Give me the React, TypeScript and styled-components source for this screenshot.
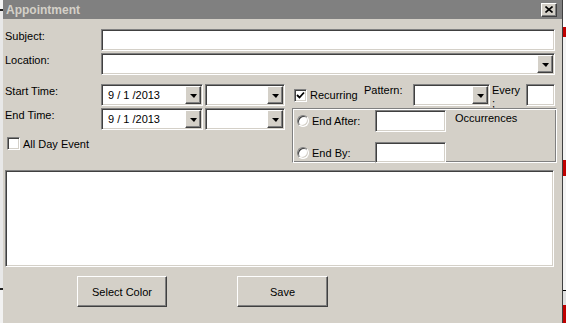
import styled, { createGlobalStyle } from 'styled-components';

const GlobalStyle = createGlobalStyle`
  html, body {
    margin: 0;
    padding: 0;
    background: #ffffff;
  }
  body {
    font-family: "Liberation Sans", Arial, sans-serif;
    font-size: 11px;
    color: #000000;
  }
`;

const Page = styled.div`
  display: flex;
  width: 566px;
  height: 323px;
  overflow: hidden;
`;

const LeftEdge = styled.div`
  width: 3px;
  background: linear-gradient(to bottom, #f2f2f2 0 9px, #202020 9px 11px, #e8e8e8 11px 288px, #202020 288px 290px, #f2f2f2 290px);
`;

const RightEdge = styled.div`
  width: 3px;
  border-left: 1px solid #404040;
  background: linear-gradient(to bottom, #ffffff 0 27px, #c00000 27px 37px, #f4f4f4 37px 160px, #c00000 160px 176px, #f4f4f4 176px 290px, #000000 290px 291px, #e0e0e0 291px 305px, #c00000 305px);
`;

const Dialog = styled.div`
  width: 559px;
  display: flex;
  flex-direction: column;
`;

const TitleBar = styled.div`
  height: 19px;
  flex-shrink: 0;
  background: #808080;
  display: flex;
  align-items: center;
  justify-content: space-between;
  padding: 0 5px 0 3px;
`;

const Title = styled.span`
  color: #d4d0c8;
  font-weight: bold;
  font-size: 12px;
`;

const raised = `
  background: #d4d0c8;
  border: 1px solid;
  border-color: #ffffff #404040 #404040 #ffffff;
  box-shadow: inset -1px -1px #808080, inset 1px 1px #d4d0c8;
`;

const sunken = `
  background: #ffffff;
  border: 1px solid;
  border-color: #808080 #ffffff #ffffff #808080;
  box-shadow: inset 1px 1px #404040, inset -1px -1px #d4d0c8;
`;

const CloseButton = styled.div`
  ${raised}
  box-sizing: border-box;
  width: 16px;
  height: 14px;
  display: flex;
  align-items: center;
  justify-content: center;
`;

const Body = styled.div`
  flex: 1;
  background: #d4d0c8;
  padding: 10px 0 0 2px;
  display: flex;
  flex-direction: column;
`;

const Row = styled.div<{ $mt?: number }>`
  display: flex;
  align-items: flex-start;
  margin-top: ${p => p.$mt ?? 0}px;
`;

const Label = styled.span<{ $w?: number; $top?: number }>`
  width: ${p => (p.$w ? `${p.$w}px` : 'auto')};
  flex-shrink: 0;
  line-height: 13px;
  padding-top: ${p => p.$top ?? 0}px;
  white-space: nowrap;
`;

const TextBox = styled.div<{ $w: number; $h?: number }>`
  ${sunken}
  box-sizing: border-box;
  width: ${p => p.$w}px;
  height: ${p => p.$h ?? 22}px;
  flex-shrink: 0;
`;

const Combo = styled.div<{ $w: number; $ml?: number }>`
  ${sunken}
  box-sizing: border-box;
  width: ${p => p.$w}px;
  height: 22px;
  margin-left: ${p => p.$ml ?? 0}px;
  flex-shrink: 0;
  display: flex;
  align-items: center;
  justify-content: space-between;
  padding: 0 1px 0 6px;
`;

const ComboText = styled.span`
  white-space: pre;
`;

const DropButton = styled.div`
  ${raised}
  box-sizing: border-box;
  width: 16px;
  height: 18px;
  display: flex;
  align-items: center;
  justify-content: center;
  margin-left: auto;
`;

const Arrow = styled.div`
  width: 0;
  height: 0;
  border-left: 4px solid transparent;
  border-right: 3px solid transparent;
  border-top: 4px solid #000000;
  margin-top: 1px;
`;

const Middle = styled.div`
  display: flex;
  margin-top: 9px;
`;

const LeftCol = styled.div`
  width: 280px;
  display: flex;
  flex-direction: column;
`;

const RightPanel = styled.div`
  margin-left: 7px;
  width: 265px;
  display: flex;
  flex-direction: column;
`;

const CheckRow = styled.div<{ $h: number; $ml?: number; $mt?: number }>`
  display: flex;
  align-items: center;
  height: ${p => p.$h}px;
  margin-left: ${p => p.$ml ?? 0}px;
  margin-top: ${p => p.$mt ?? 0}px;
`;

const CheckBox = styled.div`
  ${sunken}
  box-sizing: border-box;
  width: 13px;
  height: 13px;
  flex-shrink: 0;
  display: flex;
  align-items: center;
  justify-content: center;
`;

const Radio = styled.div`
  ${sunken}
  box-sizing: border-box;
  width: 12px;
  height: 12px;
  border-radius: 50%;
  flex-shrink: 0;
`;

const InlineLabel = styled.span<{ $w?: number; $ml?: number; $top?: boolean }>`
  width: ${p => (p.$w ? `${p.$w}px` : 'auto')};
  margin-left: ${p => p.$ml ?? 0}px;
  flex-shrink: 0;
  white-space: nowrap;
  align-self: ${p => (p.$top ? 'flex-start' : 'auto')};
  padding-top: ${p => (p.$top ? 2 : 0)}px;
`;

const RecurRow = styled.div`
  display: flex;
  align-items: flex-start;
  height: 22px;
`;

const EveryLabel = styled.span`
  width: 34px;
  margin-left: 2px;
  line-height: 13px;
  flex-shrink: 0;
`;

const GroupBox = styled.div`
  box-sizing: border-box;
  width: 265px;
  height: 55px;
  margin-top: 2px;
  border: 1px solid;
  border-color: #808080 #ffffff #ffffff #808080;
  box-shadow: inset 1px 1px #ffffff, inset -1px -1px #808080;
  padding: 1px 0 0 4px;
  display: flex;
  flex-direction: column;
`;

const GroupRow = styled.div<{ $mt?: number }>`
  display: flex;
  align-items: center;
  margin-top: ${p => p.$mt ?? 0}px;
`;

const Memo = styled.div`
  ${sunken}
  box-sizing: border-box;
  width: 549px;
  height: 97px;
  margin-top: 7px;
  flex-shrink: 0;
`;

const ButtonRow = styled.div`
  display: flex;
  gap: 70px;
  margin-top: 9px;
  padding-left: 72px;
`;

const PushButton = styled.div<{ $w: number }>`
  ${raised}
  box-sizing: border-box;
  width: ${p => p.$w}px;
  height: 31px;
  display: flex;
  align-items: center;
  justify-content: center;
`;

function DropDown(props: { w: number; ml?: number; text?: string }) {
  return (
    <Combo $w={props.w} $ml={props.ml}>
      <ComboText>{props.text ?? ''}</ComboText>
      <DropButton><Arrow /></DropButton>
    </Combo>
  );
}

function CloseIcon() {
  return (
    <svg width="8" height="7" viewBox="0 0 8 7">
      <path d="M0.5 0.5 L7.5 6.5 M7.5 0.5 L0.5 6.5" stroke="#000" strokeWidth="1.6" />
    </svg>
  );
}

function CheckMark() {
  return (
    <svg width="9" height="9" viewBox="0 0 9 9">
      <path d="M1 4 L3.5 6.5 L8 1.5" fill="none" stroke="#000" strokeWidth="1.8" />
    </svg>
  );
}

function Recurrence() {
  return (
    <RightPanel>
      <RecurRow>
        <CheckRow $h={22} $ml={2}>
          <CheckBox><CheckMark /></CheckBox>
          <InlineLabel $w={54} $ml={3}>Recurring</InlineLabel>
        </CheckRow>
        <Label $w={49}>Pattern:</Label>
        <DropDown w={77} />
        <EveryLabel>Every<br />;</EveryLabel>
        <TextBox $w={29} />
      </RecurRow>
      <GroupBox>
        <GroupRow>
          <Radio />
          <InlineLabel $w={63} $ml={3}>End After:</InlineLabel>
          <TextBox $w={71} />
          <InlineLabel $ml={9} $top>Occurrences</InlineLabel>
        </GroupRow>
        <GroupRow $mt={10}>
          <Radio />
          <InlineLabel $w={63} $ml={3}>End By:</InlineLabel>
          <TextBox $w={71} $h={21} />
        </GroupRow>
      </GroupBox>
    </RightPanel>
  );
}

function Times() {
  return (
    <LeftCol>
      <Row>
        <Label $w={96} $top={1}>Start Time:</Label>
        <DropDown w={102} text="9 / 1 /2013" />
        <DropDown w={80} ml={2} />
      </Row>
      <Row $mt={2}>
        <Label $w={96} $top={1}>End Time:</Label>
        <DropDown w={102} text="9 / 1 /2013" />
        <DropDown w={80} ml={2} />
      </Row>
      <CheckRow $h={13} $ml={2} $mt={7}>
        <CheckBox />
        <InlineLabel $ml={3}>All Day Event</InlineLabel>
      </CheckRow>
    </LeftCol>
  );
}

function App() {
  return (
    <>
      <GlobalStyle />
      <Page>
        <LeftEdge />
        <Dialog>
          <TitleBar>
            <Title>Appointment</Title>
            <CloseButton><CloseIcon /></CloseButton>
          </TitleBar>
          <Body>
            <Row>
              <Label $w={96} $top={1}>Subject:</Label>
              <TextBox $w={454} />
            </Row>
            <Row $mt={2}>
              <Label $w={96} $top={1}>Location:</Label>
              <DropDown w={454} />
            </Row>
            <Middle>
              <Times />
              <Recurrence />
            </Middle>
            <Memo />
            <ButtonRow>
              <PushButton $w={90}>Select Color</PushButton>
              <PushButton $w={91}>Save</PushButton>
            </ButtonRow>
          </Body>
        </Dialog>
        <RightEdge />
      </Page>
    </>
  );
}

export default App;
